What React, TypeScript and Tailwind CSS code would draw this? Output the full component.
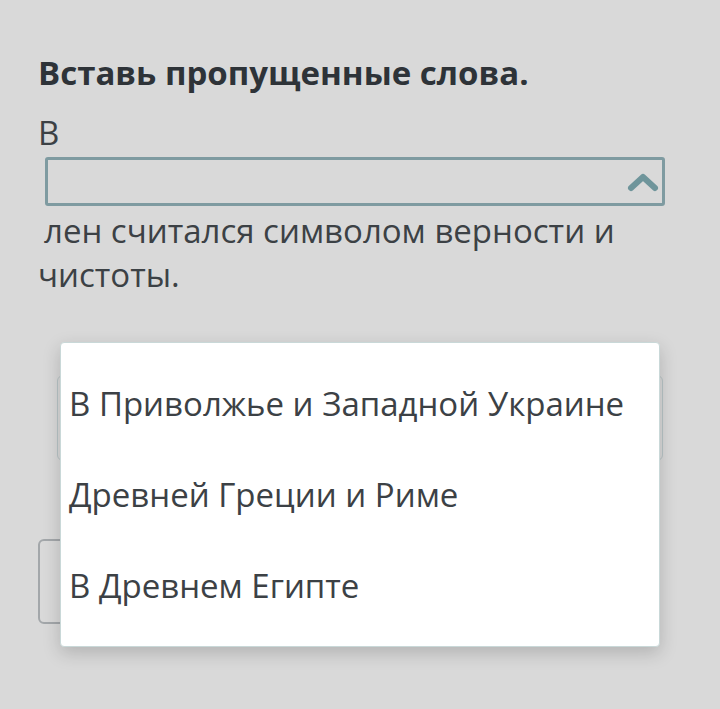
import React from "react";

export default function App() {
  const options = [
    "В Приволжье и Западной Украине",
    "Древней Греции и Риме",
    "В Древнем Египте",
  ];
  return (
    <div
      className="relative min-h-[709px] w-[720px] bg-[#d9d9d9] overflow-hidden"
      style={{ fontFamily: '"Open Sans", "Noto Sans", sans-serif' }}
    >
      <div className="pl-[38px] pr-[38px] pt-[51px]">
        <h1 className="text-[33px] font-bold leading-[44px] text-[#2e3338]">
          Вставь пропущенные слова.
        </h1>
        <div className="mt-[24px] text-[33px] leading-[44px] text-[#3c4145]">
          <div className="leading-[28px]">В</div>
          <div className="ml-[7px] mt-[10px] mr-[17px] flex h-[49px] items-center justify-end rounded-[3px] border-[3px] border-[#7f9ba1] pr-[3px]">
            <svg width="32" height="20" viewBox="0 0 32 20">
              <polyline
                points="4,16 16,5 28,16"
                fill="none"
                stroke="#6f959b"
                strokeWidth="6"
                strokeLinecap="round"
                strokeLinejoin="round"
              />
            </svg>
          </div>
          <div className="mt-[3px] pl-[6px]">лен считался символом верности и</div>
          <div>чистоты.</div>
        </div>
        <div className="ml-[19px] mr-[19px] mt-[78px] h-[86px] rounded-[6px] border border-[#b9c4c6] bg-[#d9d9d9]" />
        <div className="mt-[78px] h-[85px] w-[200px] rounded-[6px] border-2 border-[#a3a7aa]" />
      </div>

      <div className="absolute left-[60px] top-[342px] w-[600px] rounded-[4px] border border-[#c9d8d8] bg-white py-[15px] shadow-[0_6px_18px_rgba(0,0,0,0.18)]">
        {options.map((o) => (
          <div
            key={o}
            className="flex h-[91px] items-center px-[8px] text-[33px] text-[#3c4145]"
          >
            {o}
          </div>
        ))}
      </div>
    </div>
  );
}
